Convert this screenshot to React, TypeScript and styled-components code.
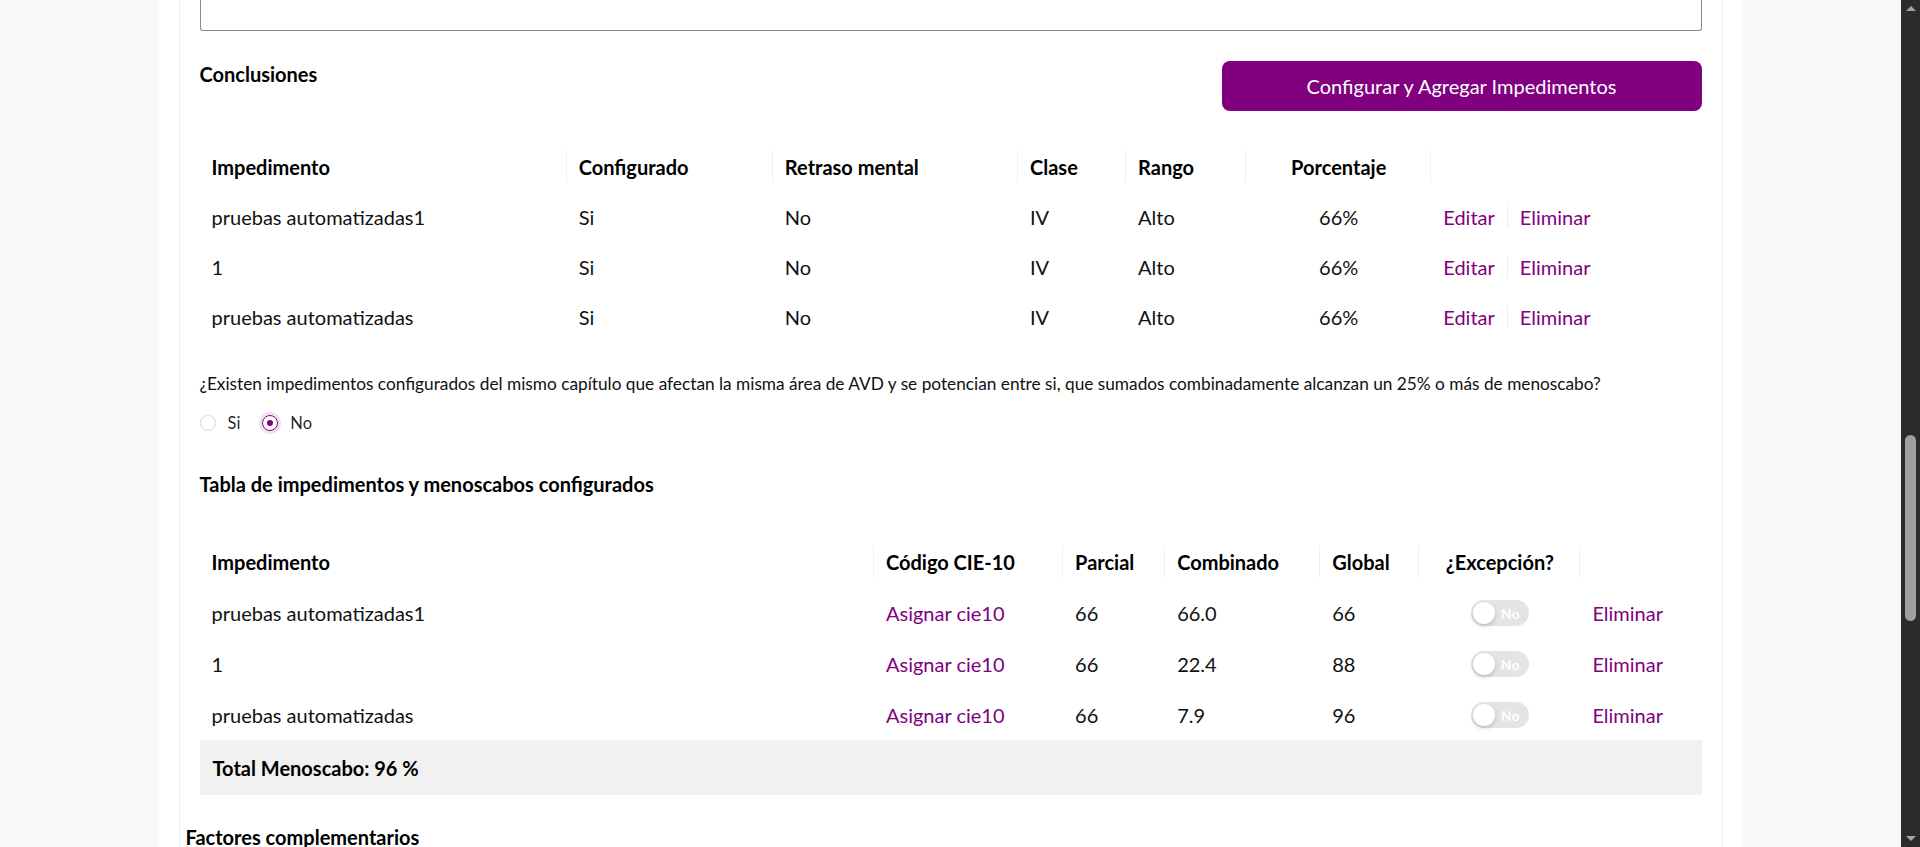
import React from "react";
import styled, { createGlobalStyle } from "styled-components";

const GlobalStyle = createGlobalStyle`
  html, body, #root { height: 100%; }
  body {
    margin: 0;
    font-family: Lato, "Open Sans", Arial, sans-serif;
    color: rgba(0, 0, 0, 0.88);
    overflow: hidden;
  }
  * { box-sizing: border-box; }
`;

const PURPLE = "#800080";

const Viewport = styled.div`
  display: flex;
  height: 100vh;
  overflow: hidden;
`;

const Main = styled.div`
  flex: 1;
  background: #f8f8f8;
  overflow: hidden;
`;

const Container = styled.div`
  width: 1584px;
  margin: 0 auto;
  min-height: 100%;
  background: #ffffff;
  padding: 0 20px;
`;

const Card = styled.section`
  min-height: 100vh;
  border-left: 1px solid #f0f0f0;
  border-right: 1px solid #f0f0f0;
  padding: 0 6px;
`;

const Section = styled.div`
  padding: 0 14px 20px;
`;

const TextareaStub = styled.div`
  height: 31px;
  border: 1px solid #8a8a8a;
  border-top: none;
  border-radius: 0 0 3px 3px;
`;

const SectionHeader = styled.div`
  display: flex;
  justify-content: space-between;
  align-items: flex-start;
  margin-top: 30px;
`;

const Heading = styled.h3<{ $mt?: number }>`
  margin: ${(p) => p.$mt ?? 0}px 0 0;
  font-size: 20px;
  font-weight: 700;
  line-height: 27px;
  color: #000;
`;

const PrimaryButton = styled.button`
  width: 480px;
  height: 50px;
  border: none;
  border-radius: 8px;
  background: ${PURPLE};
  color: #fff;
  font-family: inherit;
  font-size: 20px;
  cursor: pointer;
`;

const Table = styled.table<{ $mt: number }>`
  width: 100%;
  margin-top: ${(p) => p.$mt}px;
  border-collapse: collapse;
  table-layout: fixed;
  font-size: 20px;
`;

const Th = styled.th<{ $center?: boolean; $sep?: boolean }>`
  position: relative;
  height: 50px;
  padding: 0 12px;
  text-align: ${(p) => (p.$center ? "center" : "left")};
  font-weight: 700;
  color: #000;
  white-space: nowrap;
  &::before {
    content: "";
    display: ${(p) => (p.$sep ? "block" : "none")};
    position: absolute;
    right: 0;
    top: 50%;
    width: 1px;
    height: 32px;
    transform: translateY(-50%);
    background: #f0f0f0;
  }
`;

const Tr = styled.tr<{ $h: number }>`
  height: ${(p) => p.$h}px;
`;

const Td = styled.td<{ $center?: boolean }>`
  padding: 0 12px;
  text-align: ${(p) => (p.$center ? "center" : "left")};
  vertical-align: middle;
  white-space: nowrap;
  color: #111;
`;

const Link = styled.a`
  color: ${PURPLE};
  text-decoration: none;
  cursor: pointer;
`;

const Actions = styled.div`
  display: flex;
  align-items: center;
  gap: 12px;
`;

const Divider = styled.span`
  width: 1px;
  height: 22px;
  background: #ececec;
`;

const Question = styled.p`
  margin: 30px 0 0;
  font-size: 17.25px;
  line-height: 24px;
  color: #111;
`;

const RadioGroup = styled.div`
  display: flex;
  align-items: center;
  margin-top: 15px;
  height: 24px;
`;

const RadioItem = styled.label`
  display: inline-flex;
  align-items: center;
  margin-right: 14px;
  font-size: 16.5px;
  cursor: pointer;
`;

const RadioCircle = styled.span<{ $checked?: boolean }>`
  width: 16px;
  height: 16px;
  border-radius: 50%;
  border: 1px solid ${(p) => (p.$checked ? PURPLE : "#d9d9d9")};
  display: inline-flex;
  align-items: center;
  justify-content: center;
  box-shadow: ${(p) => (p.$checked ? "0 0 0 3px rgba(128, 0, 128, 0.12)" : "none")};
  &::after {
    content: "";
    display: ${(p) => (p.$checked ? "block" : "none")};
    width: 6px;
    height: 6px;
    border-radius: 50%;
    background: ${PURPLE};
  }
`;

const RadioLabel = styled.span`
  padding: 0 8px 0 12px;
`;

const Switch = styled.span`
  display: inline-flex;
  align-items: center;
  position: relative;
  width: 58px;
  height: 26px;
  border-radius: 13px;
  background: #e4e4e4;
  vertical-align: middle;
`;

const Knob = styled.span`
  position: absolute;
  left: 2px;
  top: 2px;
  width: 22px;
  height: 22px;
  border-radius: 50%;
  background: #fff;
  box-shadow: 0 2px 4px rgba(0, 35, 11, 0.2);
`;

const SwitchText = styled.span`
  margin-left: 30px;
  color: #fff;
  font-size: 14px;
  font-weight: 700;
`;

const TotalRow = styled.div`
  height: 55px;
  display: flex;
  align-items: center;
  padding: 0 13px;
  background: #f1f1f1;
  font-size: 20px;
  font-weight: 700;
  color: #000;
`;

const Scrollbar = styled.div`
  width: 19px;
  background: #2b2b2b;
  display: flex;
  flex-direction: column;
  align-items: center;
`;

const Arrow = styled.div<{ $down?: boolean }>`
  height: 17px;
  display: flex;
  align-items: center;
  justify-content: center;
  &::after {
    content: "";
    width: 0;
    height: 0;
    border-left: 5px solid transparent;
    border-right: 5px solid transparent;
    ${(p) =>
      p.$down
        ? "border-top: 5px solid #a3a3a3;"
        : "border-bottom: 5px solid #a3a3a3;"}
  }
`;

const Track = styled.div`
  flex: 1;
  width: 100%;
  display: flex;
  justify-content: center;
`;

const Thumb = styled.div`
  width: 11px;
  height: 186px;
  margin-top: 418px;
  border-radius: 6px;
  background: #9f9f9f;
`;

const conclusions = [
  { name: "pruebas automatizadas1" },
  { name: "1" },
  { name: "pruebas automatizadas" },
];

const impairments = [
  { name: "pruebas automatizadas1", parcial: "66", comb: "66.0", global: "66" },
  { name: "1", parcial: "66", comb: "22.4", global: "88" },
  { name: "pruebas automatizadas", parcial: "66", comb: "7.9", global: "96" },
];

export default function App() {
  return (
    <>
      <GlobalStyle />
      <Viewport>
        <Main>
          <Container>
            <Card>
              <Section>
                <TextareaStub />
                <SectionHeader>
                  <Heading>Conclusiones</Heading>
                  <PrimaryButton>Configurar y Agregar Impedimentos</PrimaryButton>
                </SectionHeader>

                <Table $mt={31}>
                  <colgroup>
                    <col style={{ width: 367 }} />
                    <col style={{ width: 206 }} />
                    <col style={{ width: 245 }} />
                    <col style={{ width: 108 }} />
                    <col style={{ width: 120 }} />
                    <col style={{ width: 185 }} />
                    <col style={{ width: 270 }} />
                  </colgroup>
                  <thead>
                    <tr>
                      <Th $sep>Impedimento</Th>
                      <Th $sep>Configurado</Th>
                      <Th $sep>Retraso mental</Th>
                      <Th $sep>Clase</Th>
                      <Th $sep>Rango</Th>
                      <Th $sep $center>Porcentaje</Th>
                      <Th />
                    </tr>
                  </thead>
                  <tbody>
                    {conclusions.map((r) => (
                      <Tr $h={50} key={r.name}>
                        <Td>{r.name}</Td>
                        <Td>Si</Td>
                        <Td>No</Td>
                        <Td>IV</Td>
                        <Td>Alto</Td>
                        <Td $center>66%</Td>
                        <Td>
                          <Actions>
                            <Link>Editar</Link>
                            <Divider />
                            <Link>Eliminar</Link>
                          </Actions>
                        </Td>
                      </Tr>
                    ))}
                  </tbody>
                </Table>

                <Question>
                  ¿Existen impedimentos configurados del mismo capítulo que afectan la misma área de AVD y se
                  potencian entre si, que sumados combinadamente alcanzan un 25% o más de menoscabo?
                </Question>
                <RadioGroup>
                  <RadioItem>
                    <RadioCircle />
                    <RadioLabel>Si</RadioLabel>
                  </RadioItem>
                  <RadioItem>
                    <RadioCircle $checked />
                    <RadioLabel>No</RadioLabel>
                  </RadioItem>
                </RadioGroup>

                <Heading $mt={36}>Tabla de impedimentos y menoscabos configurados</Heading>

                <Table $mt={39}>
                  <colgroup>
                    <col style={{ width: 674 }} />
                    <col style={{ width: 189 }} />
                    <col style={{ width: 102 }} />
                    <col style={{ width: 155 }} />
                    <col style={{ width: 99 }} />
                    <col style={{ width: 161 }} />
                    <col style={{ width: 121 }} />
                  </colgroup>
                  <thead>
                    <tr>
                      <Th $sep>Impedimento</Th>
                      <Th $sep>Código CIE-10</Th>
                      <Th $sep>Parcial</Th>
                      <Th $sep>Combinado</Th>
                      <Th $sep>Global</Th>
                      <Th $sep $center>¿Excepción?</Th>
                      <Th />
                    </tr>
                  </thead>
                  <tbody>
                    {impairments.map((r) => (
                      <Tr $h={51} key={r.name}>
                        <Td>{r.name}</Td>
                        <Td>
                          <Link>Asignar cie10</Link>
                        </Td>
                        <Td>{r.parcial}</Td>
                        <Td>{r.comb}</Td>
                        <Td>{r.global}</Td>
                        <Td $center>
                          <Switch>
                            <Knob />
                            <SwitchText>No</SwitchText>
                          </Switch>
                        </Td>
                        <Td>
                          <Link>Eliminar</Link>
                        </Td>
                      </Tr>
                    ))}
                  </tbody>
                </Table>
                <TotalRow>Total Menoscabo: 96 %</TotalRow>
              </Section>
              <Heading $mt={9}>Factores complementarios</Heading>
            </Card>
          </Container>
        </Main>
        <Scrollbar>
          <Arrow />
          <Track>
            <Thumb />
          </Track>
          <Arrow $down />
        </Scrollbar>
      </Viewport>
    </>
  );
}
